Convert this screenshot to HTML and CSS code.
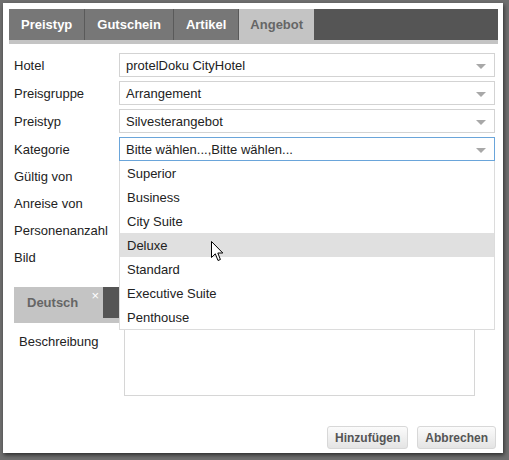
FILE: index.html
```html
<!DOCTYPE html>
<html>
<head>
<meta charset="utf-8">
<link rel="stylesheet" href="styles.css">
</head>
<body>
<div class="dialog">
  <div class="tabbar">
    <div class="tab">Preistyp</div>
    <div class="tab">Gutschein</div>
    <div class="tab">Artikel</div>
    <div class="tab active">Angebot</div>
  </div>
  <div class="form">
    <div class="row">
      <div class="label">Hotel</div>
      <div class="select"><span>protelDoku CityHotel</span><i class="arrow"></i></div>
    </div>
    <div class="row">
      <div class="label">Preisgruppe</div>
      <div class="select"><span>Arrangement</span><i class="arrow"></i></div>
    </div>
    <div class="row">
      <div class="label">Preistyp</div>
      <div class="select"><span>Silvesterangebot</span><i class="arrow"></i></div>
    </div>
    <div class="row">
      <div class="label">Kategorie</div>
      <div class="select-wrap">
        <div class="select focus"><span>Bitte wählen...,Bitte wählen...</span><i class="arrow"></i></div>
        <ul class="dropdown">
          <li>Superior</li>
          <li>Business</li>
          <li>City Suite</li>
          <li class="hover">Deluxe</li>
          <li>Standard</li>
          <li>Executive Suite</li>
          <li>Penthouse</li>
        </ul>
      </div>
    </div>
    <div class="row small">
      <div class="label">Gültig von</div>
      <div class="input"></div>
    </div>
    <div class="row small">
      <div class="label">Anreise von</div>
      <div class="input"></div>
    </div>
    <div class="row small">
      <div class="label">Personenanzahl</div>
      <div class="input"></div>
    </div>
    <div class="row small">
      <div class="label">Bild</div>
      <div class="input"></div>
    </div>
    <div class="lang">
      <div class="langbar">
        <div class="langtab">Deutsch<span class="close">×</span></div>
      </div>
      <div class="langpanel">
        <div class="label2">Beschreibung</div>
        <div class="textarea"></div>
      </div>
    </div>
  </div>
  <div class="buttons">
    <button class="btn">Hinzufügen</button>
    <button class="btn">Abbrechen</button>
  </div>
</div>
<svg class="cursor" width="13" height="21" viewBox="0 0 13 21"><path d="M0.5 0.5 L0.5 16.5 L4.3 12.8 L7 19.5 L9.4 18.5 L6.8 12 L11.8 12 Z" fill="#fff" stroke="#000" stroke-width="1"/></svg>
</body>
</html>
```
FILE: styles.css
```css
html, body {
  margin: 0;
  padding: 0;
}
body {
  background: #6f6f6f;
  width: 509px;
  height: 460px;
  overflow: hidden;
  font-family: "Liberation Sans", Arial, sans-serif;
  font-size: 13px;
  color: #222;
  position: relative;
}
.dialog {
  margin: 3px 0 0 3px;
  width: 500px;
  height: 450px;
  box-sizing: border-box;
  padding: 6px 5px 4px 6px;
  background: #fff;
  box-shadow: 1px 2px 4px rgba(0,0,0,0.6);
  display: flex;
  flex-direction: column;
}
.tabbar {
  display: flex;
  height: 31px;
  background: #555;
  border-bottom: 4px solid #c4c4c4;
}
.tab {
  background: #777;
  color: #fff;
  font-weight: bold;
  padding: 0 12px;
  line-height: 31px;
  border-right: 1px solid #5a5a5a;
}
.tab.active {
  background: #c4c4c4;
  color: #666;
  border-right: none;
  padding: 0 11px;
}
.form {
  margin-top: 9px;
  padding-left: 5px;
  display: flex;
  flex-direction: column;
  gap: 4px;
}
.row {
  display: flex;
  align-items: center;
}
.label {
  width: 105px;
  flex: none;
}
.select {
  width: 376px;
  height: 24px;
  box-sizing: border-box;
  border: 1px solid #d3d3d3;
  display: flex;
  align-items: center;
  padding-left: 6px;
  position: relative;
  background: #fff;
}
.select.focus {
  border-color: #6aa5da;
}
.arrow {
  position: absolute;
  right: 8px;
  top: 10px;
  width: 0;
  height: 0;
  border-left: 5px solid transparent;
  border-right: 5px solid transparent;
  border-top: 5px solid #a8a8a8;
}
.select-wrap {
  position: relative;
}
.dropdown {
  position: absolute;
  top: 24px;
  left: 0;
  width: 376px;
  box-sizing: border-box;
  margin: 0;
  padding: 0;
  list-style: none;
  background: #fff;
  border: 1px solid #dcdcdc;
  border-top: none;
  z-index: 5;
}
.dropdown li {
  height: 23px;
  padding-top: 1px;
  line-height: 24px;
  padding-left: 7px;
}
.dropdown li.hover {
  background: #e0e0e0;
}
.row.small .input {
  width: 376px;
  height: 23px;
  box-sizing: border-box;
  border: 1px solid #d3d3d3;
}
.lang {
  margin-top: 14px;
}
.langbar {
  display: flex;
  height: 31px;
  background: #555;
  border-bottom: 5px solid #c4c4c4;
  width: 461px;
}
.langtab {
  width: 89px;
  box-sizing: border-box;
  background: #c4c4c4;
  color: #666;
  font-weight: bold;
  padding-left: 13px;
  line-height: 32px;
  position: relative;
}
.close {
  position: absolute;
  right: 4px;
  top: -7px;
  color: #fff;
  font-weight: normal;
  font-size: 13px;
}
.langpanel {
  display: flex;
  padding: 6px 0 0 5px;
}
.label2 {
  width: 105px;
  flex: none;
  padding-top: 5px;
}
.textarea {
  width: 351px;
  height: 67px;
  box-sizing: border-box;
  border: 1px solid #d6d6d6;
}
.buttons {
  margin-top: auto;
  display: flex;
  justify-content: flex-end;
  gap: 9px;
  padding-right: 2px;
}
.btn {
  font-family: "Liberation Sans", Arial, sans-serif;
  font-size: 12px;
  font-weight: bold;
  color: #555;
  height: 23px;
  padding: 0 7px;
  border: 1px solid #d8d8d8;
  border-radius: 3px;
  background: linear-gradient(#fbfbfb, #e4e4e4);
}
.cursor {
  position: absolute;
  left: 211px;
  top: 241px;
  z-index: 10;
}
```
